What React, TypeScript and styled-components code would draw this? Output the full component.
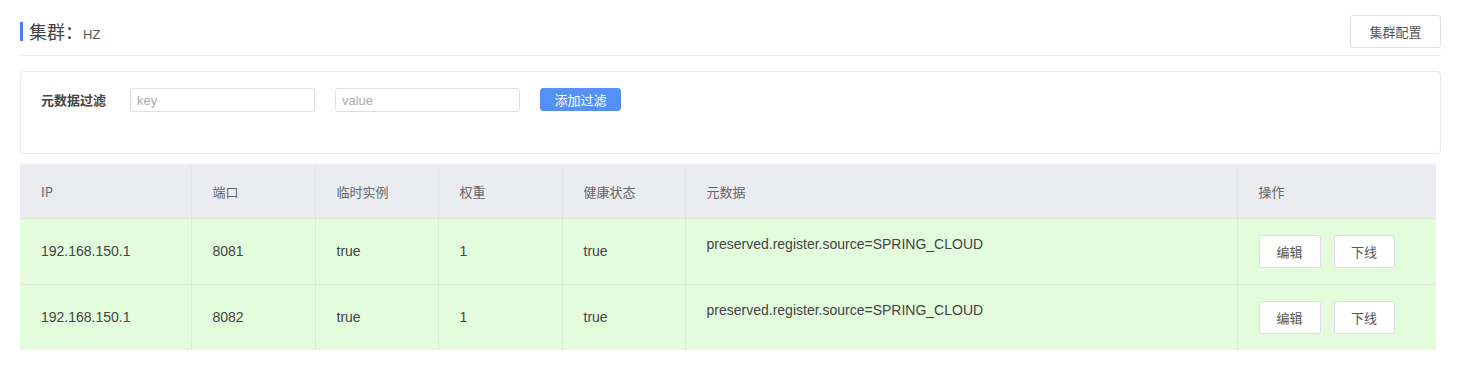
import React from "react";
import styled, { createGlobalStyle } from "styled-components";

const GlobalStyle = createGlobalStyle`
  html, body { margin: 0; padding: 0; background: #fff; }
  body { font-family: "Liberation Sans", "Noto Sans CJK SC", sans-serif; color: #333; }
  * { box-sizing: border-box; }
`;

const Page = styled.div`
  width: 1463px;
  padding: 0 22px 0 20px;
`;

const TitleBar = styled.div`
  height: 56px;
  display: flex;
  align-items: center;
  justify-content: space-between;
  border-bottom: 1px solid #eceef2;
  padding-top: 8px;
`;

const Title = styled.div`
  display: flex;
  align-items: baseline;
  border-left: 3px solid #4d7cf6;
  padding-left: 6px;
  height: 19px;
  line-height: 19px;
`;

const TitleMain = styled.span`
  font-family: "Noto Sans CJK SC", sans-serif;
  font-size: 18px;
  color: #444;
`;

const TitleSub = styled.span`
  font-size: 13px;
  color: #555;
`;

const Button = styled.button<{ $w: number; $h: number; $primary?: boolean }>`
  width: ${(p) => p.$w}px;
  height: ${(p) => p.$h}px;
  padding: 0;
  border-radius: 3px;
  border: 1px solid ${(p) => (p.$primary ? "#5590f7" : "#dcdfe6")};
  background: ${(p) => (p.$primary ? "#5590f7" : "#fff")};
  color: ${(p) => (p.$primary ? "#fff" : "#555")};
  font-family: "Noto Sans CJK SC", sans-serif;
  font-size: 13px;
  cursor: pointer;
`;

const FilterCard = styled.div`
  margin-top: 15px;
  height: 83px;
  border: 1px solid #e8eaee;
  border-radius: 4px;
  padding: 16px 20px;
  display: flex;
  align-items: flex-start;
`;

const FilterLabel = styled.label`
  width: 89px;
  line-height: 24px;
  font-family: "Noto Sans CJK SC", sans-serif;
  font-weight: bold;
  font-size: 13px;
  color: #444;
`;

const Input = styled.input`
  width: 185px;
  height: 24px;
  margin-right: 20px;
  border: 1px solid #dcdfe6;
  border-radius: 3px;
  padding: 0 6px;
  font-family: "Liberation Sans", sans-serif;
  font-size: 13px;
  outline: none;
  &::placeholder { color: #aaa; }
`;

const TableWrap = styled.div`
  margin-top: 9px;
  border-top: 2px solid #f3f4f6;
  width: 1416px;
`;

const Table = styled.table`
  width: 1416px;
  border-collapse: collapse;
  table-layout: fixed;
  font-size: 14px;
`;

const Th = styled.th<{ $w: number }>`
  width: ${(p) => p.$w}px;
  height: 53px;
  background: #ebecf0;
  text-align: left;
  font-weight: normal;
  font-size: 13px;
  color: #666;
  padding: 0 0 0 21px;
  border-right: 1px solid #e2e4e8;
  font-family: "Noto Sans CJK SC", sans-serif;
  &:last-child { border-right: none; }
`;

const Td = styled.td<{ $top?: boolean }>`
  height: 66px;
  background: #e3fcdc;
  padding: ${(p) => (p.$top ? "17px 0 0 21px" : "0 0 0 21px")};
  vertical-align: ${(p) => (p.$top ? "top" : "middle")};
  border-right: 1px solid #d9ecd3;
  border-top: 1px solid #d7e8d2;
  color: #444;
  &:last-child { border-right: none; }
`;

const Actions = styled.div`
  display: flex;
  gap: 13px;
`;

const cols: [string, number][] = [
  ["IP", 171],
  ["端口", 124],
  ["临时实例", 123],
  ["权重", 124],
  ["健康状态", 123],
  ["元数据", 552],
  ["操作", 199],
];

const rows = [
  { ip: "192.168.150.1", port: "8081" },
  { ip: "192.168.150.1", port: "8082" },
];

export default function App() {
  return (
    <>
      <GlobalStyle />
      <Page>
        <TitleBar>
          <Title>
            <TitleMain>集群：</TitleMain>
            <TitleSub>HZ</TitleSub>
          </Title>
          <Button $w={91} $h={33}>集群配置</Button>
        </TitleBar>
        <FilterCard>
          <FilterLabel>元数据过滤</FilterLabel>
          <Input placeholder="key" />
          <Input placeholder="value" />
          <Button $w={81} $h={23} $primary>添加过滤</Button>
        </FilterCard>
        <TableWrap>
          <Table>
            <thead>
              <tr>
                {cols.map(([name, w]) => (
                  <Th key={name} $w={w}>{name}</Th>
                ))}
              </tr>
            </thead>
            <tbody>
              {rows.map((r) => (
                <tr key={r.port}>
                  <Td>{r.ip}</Td>
                  <Td>{r.port}</Td>
                  <Td>true</Td>
                  <Td>1</Td>
                  <Td>true</Td>
                  <Td $top>preserved.register.source=SPRING_CLOUD</Td>
                  <Td>
                    <Actions>
                      <Button $w={62} $h={33}>编辑</Button>
                      <Button $w={61} $h={33}>下线</Button>
                    </Actions>
                  </Td>
                </tr>
              ))}
            </tbody>
          </Table>
        </TableWrap>
      </Page>
    </>
  );
}
